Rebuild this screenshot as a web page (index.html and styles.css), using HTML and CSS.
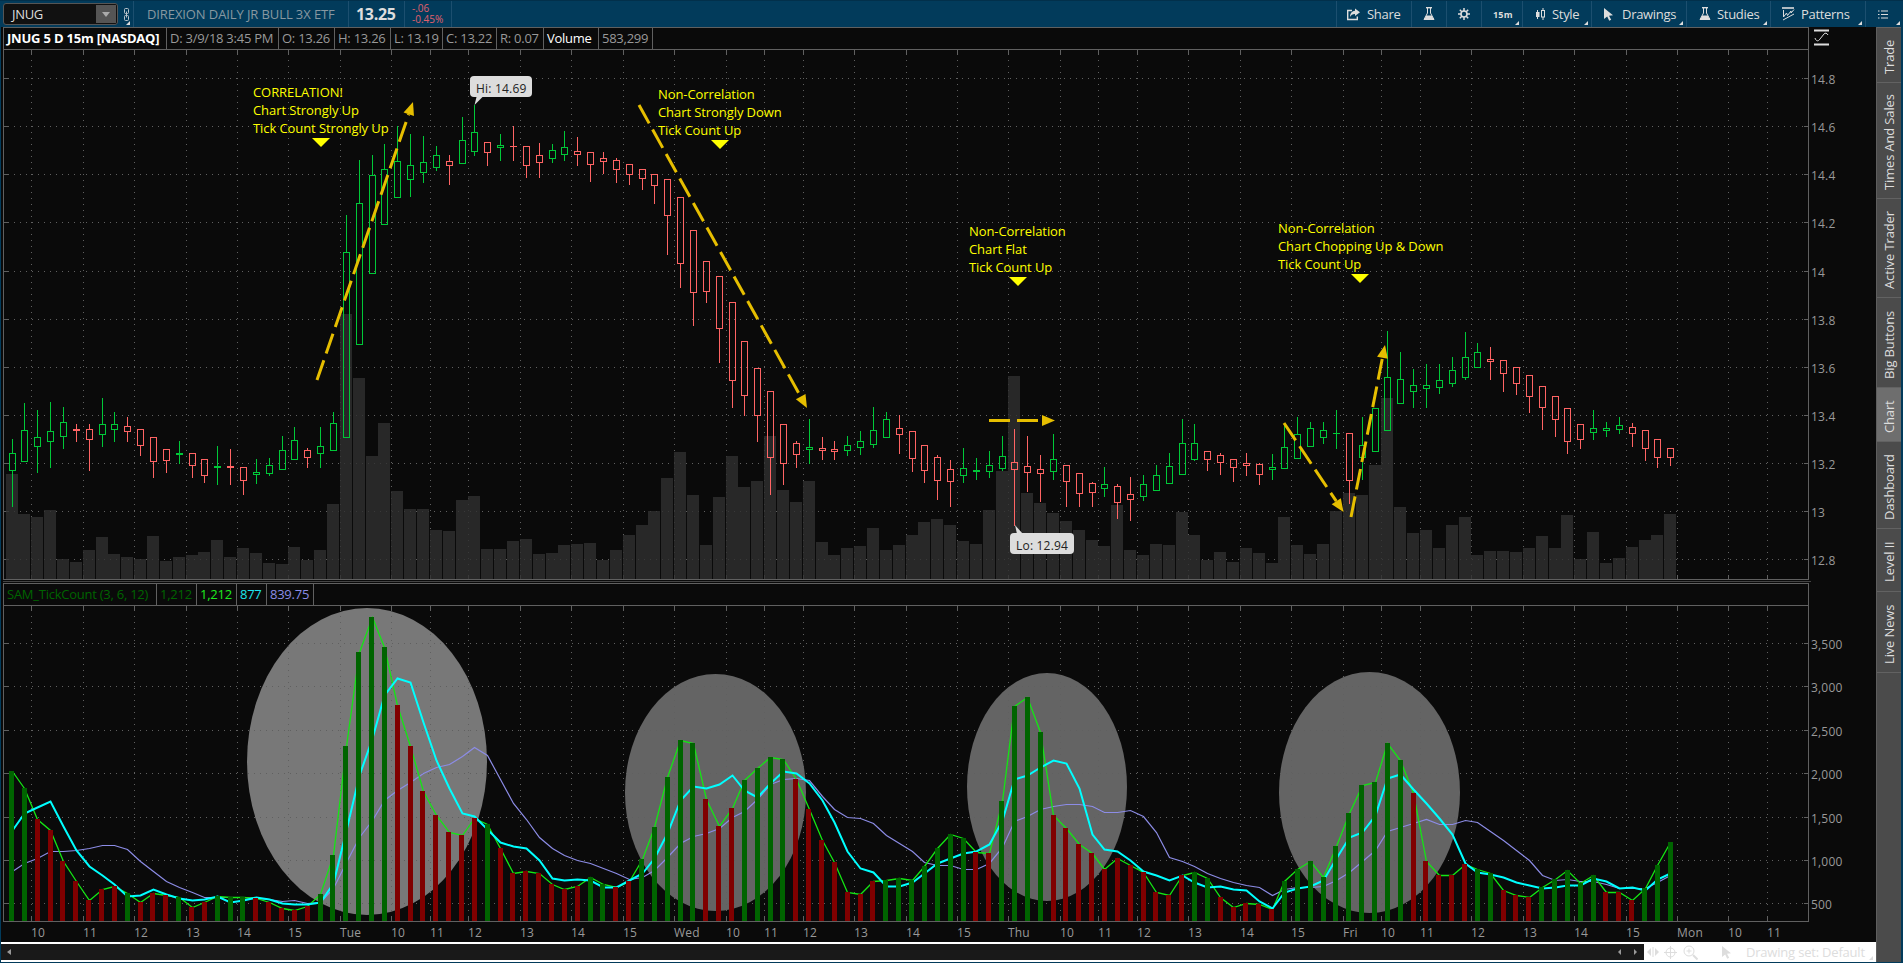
FILE: index.html
```
<!DOCTYPE html>
<html lang="en">
  <head>
    <meta charset="utf-8">
    <title>JNUG chart</title>
    <link rel="stylesheet" href="styles.css">
  </head>
  <body>
    <div class="toolbar">
      <div class="tool symbol">
        <div class="symbol-box"><span>JNUG</span><div class="drop"><svg width="8" height="5"><path d="M0 0h8l-4 5z" fill="#aaa"/></svg></div></div>
        <svg class="link" width="7" height="13" fill="none" stroke="#b9c4cb"><rect x="1.5" y="0.5" width="4" height="5" rx="1"/><rect x="1.5" y="7.5" width="4" height="5" rx="1"/><path d="M3.5 3.5v6"/></svg>
        <i class="corner"></i>
      </div>
      <div class="tool name">DIREXION DAILY JR BULL 3X ETF</div>
      <div class="tool last">13.25</div>
      <div class="tool change"><span>-.06</span><span>-0.45%</span></div>
      <div class="spacer"></div>
      <div class="tool share"><svg width="14" height="13" fill="none" stroke="#ddd" stroke-width="1.4"><path d="M6 2.5H1.7v9h9.6V8.5"/><path d="M9 0.5l5 3.8l-5 3.8V6C6.500 6 5 7 4 9C4 5.500 6 3 9 2.800z" fill="#ddd" stroke="none"/></svg><span>Share</span></div>
      <div class="tool flask"><svg width="12" height="14" fill="none" stroke="#ddd"><path d="M3 .7h6" stroke-width="1.4"/><path d="M4.500 1v5L1 12.500h10L7.500 6V1"/><path d="M3.300 8.500h5.400l2.500 4.500H.8z" fill="#ddd" stroke="none"/></svg></div>
      <div class="tool gear"><svg width="12" height="12" fill="none" stroke="#ddd"><circle cx="6" cy="6" r="3" stroke-width="1.6"/><path d="M6 0v3M6 9v3M0 6h3M9 6h3M1.800 1.800l2 2M8.200 8.200l2 2M10.200 1.800l-2 2M3.800 8.200l-2 2" stroke-width="1.500"/></svg></div>
      <div class="tool period">15m<i class="corner"></i></div>
      <div class="tool style"><svg width="11" height="12" fill="none" stroke="#ddd"><path d="M2.500 2v9M8 0v2.500M8 9v3"/><rect x="1" y="4" width="3.500" height="5" fill="#ddd" stroke="none"/><rect x="6.500" y="2.500" width="3" height="6.500"/></svg><span>Style</span><i class="corner"></i></div>
      <div class="tool drawings"><svg width="11" height="13"><path d="M1 0l9 7.300l-4 .5l2.200 4l-2 1l-2-4.200L1 11z" fill="#ddd"/></svg><span>Drawings</span><i class="corner"></i></div>
      <div class="tool studies"><svg width="12" height="14" fill="none" stroke="#ddd"><path d="M3 .7h6" stroke-width="1.4"/><path d="M4.500 1v5L1 12.500h10L7.500 6V1"/><path d="M3.300 8.500h5.400l2.500 4.500H.8z" fill="#ddd" stroke="none"/></svg><span>Studies</span><i class="corner"></i></div>
      <div class="tool patterns"><svg width="13" height="14" fill="none" stroke="#ddd"><path d="M0 1h12" stroke-width="1.6"/><path d="M1.500 3v7l3-4l1 2.500l3.500-4.500v2l3-3.500M1 13l11-6"/></svg><span>Patterns</span><i class="corner"></i></div>
      <div class="tool list"><svg width="10" height="9" stroke="#ddd" stroke-width="1.2"><path d="M0 1h1.500M3 1h7M0 4.500h1.500M3 4.500h7M0 8h1.500M3 8h7"/></svg><i class="corner"></i></div>
    </div>

    <div class="main">
      <div class="charts">
        <div class="pane price">
          <div class="legend">
            <b style="width:163px">JNUG 5 D 15m [NASDAQ]</b><span style="width:112px">D: 3/9/18 3:45 PM</span><span style="width:56px">O: 13.26</span><span style="width:56px">H: 13.26</span><span style="width:52px">L: 13.19</span><span style="width:54px">C: 13.22</span><span style="width:47px">R: 0.07</span><span class="white" style="width:55px">Volume</span><span style="width:54px">583,299</span>
          </div>
          <svg class="scale" width="15" height="17" fill="none" stroke="#ddd"><path d="M0 1.500h15M0 15.500h15" stroke-width="2"/><path d="M1 9c1 3 3 4 5 1l4-5c1-1.500 3-1 4 1"/></svg>
          <svg class="plot" id="price" viewBox="3 50 1873 530" width="1873" height="530"></svg>
        </div>
        <div class="split"></div>
        <div class="pane ticks">
          <div class="legend">
            <span class="darkgreen" style="width:153px">SAM_TickCount (3, 6, 12)</span><span class="darkgreen" style="width:40px">1,212</span><span class="lime" style="width:40px">1,212</span><span class="cyan" style="width:30px">877</span><span class="violet" style="width:47px">839.75</span>
          </div>
          <svg class="plot" id="ticks" viewBox="3 606 1873 336" width="1873" height="336"></svg>
        </div>
        <div class="bottom">
          <div class="scroll">
            <svg width="4" height="6"><path d="M4 0v6L0 3z" fill="#999"/></svg>
            <div class="spacer"></div>
            <svg width="3" height="6"><path d="M3 0v6L0 3z" fill="#999"/></svg>
            <svg width="3" height="6"><path d="M0 0v6l3-3z" fill="#999"/></svg>
          </div>
          <svg class="pan" width="12" height="10" fill="#ddd"><path d="M4 1v8L0 5zM8 1v8l4-4zM5.500 0h1v10h-1z"/></svg>
          <svg class="cross" width="13" height="13" fill="none" stroke="#ddd"><circle cx="6.500" cy="6.500" r="4.500"/><path d="M6.500 0v13M0 6.500h13"/></svg>
          <svg class="lens" width="15" height="15" fill="none" stroke="#ddd"><circle cx="6" cy="6" r="5"/><path d="M3.500 6h5M6 3.500v5"/><path d="M10 10l4.500 4.500" stroke-width="2"/></svg>
          <svg class="cursor" width="11" height="13"><path d="M1 0l9 7.300l-4 .5l2.200 4l-2 1l-2-4.200L1 11z" fill="#ddd"/></svg>
          <span>Drawing set: Default</span>
          <i class="corner"></i>
        </div>
      </div>
      <div class="tabs">
        <div class="tab" style="height:55px">Trade</div>
        <div class="tab" style="height:116px">Times And Sales</div>
        <div class="tab" style="height:99px">Active Trader</div>
        <div class="tab" style="height:90px">Big Buttons</div>
        <div class="tab active" style="height:54px">Chart</div>
        <div class="tab" style="height:87px">Dashboard</div>
        <div class="tab" style="height:63px">Level II</div>
        <div class="tab" style="height:81px">Live News</div>
        <div class="tab rest"></div>
      </div>
    </div>
    <script src="chart.js"></script>
  </body>
</html>
```
FILE: styles.css
```
* {
  box-sizing: border-box;
}
body {
  margin: 0;
  height: 963px;
  display: flex;
  flex-direction: column;
  overflow: hidden;
  background: #023b5b;
  color: #999;
  font-family: "Open Sans", "Noto Sans", sans-serif;
  font-size: 13px;
}
svg {
  display: block;
  flex: none;
}
.spacer {
  flex: 1;
}

/* toolbar */
.toolbar {
  height: 27px;
  display: flex;
  border-top: 1px solid #02304b;
  color: #ddd;
}
.tool {
  position: relative;
  display: flex;
  align-items: center;
  flex: none;
  border-right: 1px solid #1c4f6f;
  white-space: nowrap;
  letter-spacing: -.3px;
}
.corner {
  position: absolute;
  right: 3px;
  bottom: 2px;
  border-left: 4px solid transparent;
  border-bottom: 4px solid #ddd;
}
.symbol {
  width: 134px;
  padding-left: 3px;
}
.symbol-box {
  width: 115px;
  height: 22px;
  display: flex;
  align-items: center;
  justify-content: space-between;
  background: #111;
  border: 1px solid #555;
  border-radius: 3px;
  padding-left: 8px;
}
.drop {
  width: 20px;
  height: 18px;
  margin-right: 1px;
  background: #555;
  display: flex;
  align-items: center;
  justify-content: center;
}
.link {
  margin-left: 5px;
}
.name {
  width: 215px;
  padding-left: 13px;
  color: #8798a1;
  letter-spacing: -.1px;
}
.last {
  width: 56px;
  padding-left: 7px;
  font-size: 16px;
  font-weight: bold;
}
.change {
  width: 47px;
  padding-left: 7px;
  flex-direction: column;
  align-items: flex-start;
  justify-content: center;
  color: #e0606c;
  font-size: 10px;
  line-height: 11px;
  letter-spacing: 0;
}
.share {
  width: 76px;
  padding-left: 9px;
  gap: 7px;
  border-left: 1px solid #1c4f6f;
}
.flask {
  width: 35px;
  justify-content: center;
}
.gear {
  width: 35px;
  justify-content: center;
}
.period {
  width: 41px;
  padding-left: 11px;
  font-size: 9px;
  font-weight: bold;
  letter-spacing: .2px;
}
.style {
  width: 69px;
  padding-left: 12px;
  gap: 6px;
}
.drawings {
  width: 95px;
  padding-left: 11px;
  gap: 8px;
}
.studies {
  width: 84px;
  padding-left: 12px;
  gap: 6px;
}
.patterns {
  width: 95px;
  padding-left: 11px;
  gap: 6px;
}
.list {
  width: 37px;
  padding-left: 12px;
  border-right: 0;
}

/* charts */
.main {
  flex: 1;
  display: flex;
  padding: 0 1px 1px;
}
.charts {
  width: 1875px;
  display: flex;
  flex-direction: column;
  background: #0a0a0a;
}
.pane {
  display: grid;
  grid-template-columns: 1806px 67px;
  padding-left: 2px;
}
.legend {
  height: 23px;
  display: flex;
  border: 1px solid #606060;
}
.legend span, .legend b {
  border-right: 1px solid #606060;
  padding-left: 3px;
  line-height: 21px;
  white-space: nowrap;
  letter-spacing: -.25px;
}
.legend b {
  color: #fff;
  letter-spacing: -.2px;
}
.legend .white { color: #fff; }
.legend .darkgreen { color: #006400; }
.legend .lime { color: #1eea1e; }
.legend .cyan { color: #1ee6ee; }
.legend .violet { color: #8c8ce6; }
.scale {
  margin: 2px 0 0 5px;
}
.plot {
  grid-column: 1 / 3;
}
.split {
  height: 3px;
  width: 1808px;
  margin-left: 2px;
  border-bottom: 1px solid #0a0a0a;
  background: linear-gradient(#0a0a0a 1px, #444 1px);
}
.plot text {
  fill: #999;
  font-size: 12px;
  letter-spacing: .2px;
}
.plot .note {
  fill: #ff0;
  font-size: 13px;
  letter-spacing: -.08px;
}
.plot .bubble {
  fill: #222;
}

/* scrollbar row */
.bottom {
  flex: 1;
  display: flex;
  align-items: center;
  position: relative;
  background: #fff;
  color: #ddd;
}
.bottom > span {
  margin-left: 14px;
  letter-spacing: -.2px;
}
.scroll {
  width: 1643px;
  height: 16px;
  display: flex;
  align-items: center;
  padding: 0 7px 0 6px;
  gap: 13px;
  background: #191919;
}
.pan { margin-left: 3px; }
.cross { margin-left: 5px; }
.lens { margin-left: 6px; }
.cursor { margin-left: 23px; }

/* side tabs */
.tabs {
  width: 25px;
  display: flex;
  flex-direction: column;
  background: #4b4b4b;
  border-left: 1px solid #5e5e5e;
}
.tab {
  writing-mode: vertical-rl;
  transform: rotate(180deg);
  flex: none;
  width: 24px;
  padding-bottom: 4px;
  line-height: 24px;
  text-align: center;
  border-bottom: 1px solid #626262;
  color: #ddd;
  letter-spacing: -.15px;
}
.active {
  background: #6e6e6e;
}
.rest {
  flex: 1;
}
```
FILE: chart.js
```
const STEP = 12.8585;
const GRID = '#606060';
const UP = '#00c838';
const DOWN = '#ff6464';

// color, wick top, body top, body bottom, wick bottom
const candles = `
G439,453,471,507 G403,430,462,462 G410,437,447,473 G402,431,442,468 G407,422,437,449 R424,429,431,442 R424,429,440,471 G398,424,435,447 G412,424,430,442 R417,426,432,442
R429,429,446,456 R437,437,462,478 R449,449,461,473 G441,453,455,464 R453,453,466,478 R459,459,476,483 G446,466,468,485 R449,466,468,485 R467,467,481,495 G459,472,475,484
G458,465,474,476 G436,450,470,470 G427,440,460,460 R448,450,458,468 G427,446,454,468 G412,423,451,451 G215,252,438,438 G160,203,345,345 G155,175,274,274 G144,169,225,225
G126,161,198,198 G134,165,180,197 G136,162,173,183 G146,155,168,171 R155,161,166,185 G117,140,164,164 G105,132,152,156 R142,142,153,166 G134,145,148,161 R126,146,147,161
R146,146,166,178 R143,155,163,178 G144,150,159,163 G131,147,155,161 R137,151,155,166 R152,152,165,182 R152,158,162,174 R158,160,170,183 R164,164,175,185 R169,169,179,190
R174,174,186,204 R179,179,216,255 R197,197,264,288 R230,230,293,326 R261,261,292,303 R276,276,329,363 R302,302,381,408 R341,341,396,416 R368,368,416,442 R391,391,458,495
R424,424,464,485 R441,443,455,468 G419,447,450,464 R437,448,451,460 R441,449,452,460 G436,445,451,456 G431,441,448,455 G407,430,445,448 G412,419,438,438 R415,428,435,454
R431,431,459,472 R445,445,471,483 R455,457,481,500 R460,469,482,507 G448,468,476,483 G458,470,472,480 G451,465,472,478 G436,456,469,471 R429,462,470,526 R436,466,473,492
R455,469,474,502 G434,459,472,480 R465,465,482,507 R473,473,494,507 R482,483,493,507 G467,484,489,497 R484,486,503,519 R477,494,500,521 G475,484,497,501 G465,475,491,491
G453,466,484,484 G419,443,475,475 G424,443,460,461 R451,451,460,471 R453,455,463,475 R459,459,468,482 R453,463,466,476 R463,464,475,485 G454,467,470,480 G423,447,469,469
G417,434,459,459 G422,428,447,447 G422,430,438,444 G410,433,434,449 R433,433,481,504 G417,445,458,480 G408,408,452,452 G331,377,431,431 G352,379,404,404 G369,385,392,408
G364,385,389,408 G364,380,388,394 G357,370,384,387 G332,357,378,380 G343,352,368,368 R347,359,362,380 R360,360,374,392 R367,367,384,395 R375,375,397,413 R386,386,408,430
R396,396,420,437 R408,408,442,454 R424,424,440,449 G410,428,433,440 G422,428,431,437 G417,425,430,434 R423,427,434,447 R430,430,449,461 R439,439,458,468 R448,448,458,466
`.trim().split(/\s+/).map(c => [c[0], ...c.slice(1).split(',').map(Number)]);

const volume = [
  474,514,517,510,559,562,550,537,554,557,559,536,561,557,555,552,540,557,548,553,563,564,547,560,550,504,
  314,378,456,423,491,509,509,530,531,500,496,549,549,541,539,554,553,545,544,543,560,550,535,525,511,478,
  452,495,545,497,456,487,481,436,490,502,481,542,555,548,546,528,550,545,535,522,519,525,541,544,510,471,
  376,493,503,513,521,530,540,546,505,550,555,544,545,512,535,560,552,562,548,553,563,517,545,554,544,511,
  493,495,465,398,507,533,530,548,525,517,555,551,551,552,548,536,548,515,559,532,563,558,547,540,535,514
];

const ticks = [
  771,788,819,830,861,881,900,889,886,893,902,893,895,897,907,902,896,897,897,898,902,908,910,906,894,855,
  746,652,617,647,705,746,791,815,832,835,818,824,848,873,871,873,884,889,886,877,884,887,881,859,827,777,
  740,743,799,826,808,780,768,757,759,779,809,840,862,892,894,881,880,878,880,866,848,834,838,852,853,801,
  706,697,732,815,828,844,853,869,858,865,872,892,895,875,872,878,897,907,903,904,909,881,869,861,877,846,
  813,785,782,743,760,793,861,875,875,864,869,873,890,895,897,887,879,870,883,875,892,892,900,888,865,842
];
const tickColors =
  'GGRRRRRRRGRRRGRRGGGRRRRRGG' +
  'GGGGRRRRRRRGRRRRRRRGGRRGGG' +
  'GGRRRGGGGRRRRRRRGGGGGGGRRG' +
  'GGGRRRRRRRRRRRGGRRRRRGGGGG' +
  'GGGGGRRRRRGGRRRGGGGGRRRGGG';

const fast = [
  830,813,807,801,826,850,866,875,884,896,895,889,894,898,900,899,896,902,900,897,899,903,904,904,902,883,
  830,775,738,695,678,682,722,760,788,813,816,829,842,846,848,860,878,880,879,880,887,887,880,873,858,833,
  800,786,788,784,775,790,797,783,771,773,783,800,822,851,868,872,886,886,882,873,863,858,853,851,844,820,
  779,775,767,760,763,788,834,849,851,860,871,875,880,875,882,887,886,889,890,901,908,892,888,886,880,858,
  837,832,815,778,774,789,803,818,834,863,872,874,877,882,885,888,887,885,885,878,881,888,887,890,879,873
];
const slow = [
  871,863,858,851,851,850,848,845,845,849,861,871,881,887,892,897,897,897,897,898,899,901,900,903,902,888,
  862,837,820,800,790,782,773,767,764,756,747,755,779,803,819,837,848,855,860,863,868,873,879,877,870,857,
  843,836,833,828,817,811,799,784,779,778,780,796,809,817,818,823,835,843,851,862,865,865,869,869,863,847,
  821,816,809,806,804,804,806,812,812,810,816,832,857,861,866,873,878,882,885,887,895,889,887,887,886,880,
  872,861,850,831,827,823,819,824,824,820,822,831,840,850,860,875,880,879,881,881,884,888,888,888,882,875
];

const times = [
  [31,'10'],[83,'11'],[134,'12'],[186,'13'],[237,'14'],[288,'15'],
  [340,'Tue'],[391,'10'],[430,'11'],[468,'12'],[520,'13'],[571,'14'],[623,'15'],
  [674,'Wed'],[726,'10'],[764,'11'],[803,'12'],[854,'13'],[906,'14'],[957,'15'],
  [1008,'Thu'],[1060,'10'],[1098,'11'],[1137,'12'],[1188,'13'],[1240,'14'],[1291,'15'],
  [1343,'Fri'],[1381,'10'],[1420,'11'],[1471,'12'],[1523,'13'],[1574,'14'],[1626,'15'],
  [1677,'Mon'],[1728,'10'],[1767,'11']
];
const prices = [[78,'14.8'],[126,'14.6'],[174,'14.4'],[222,'14.2'],[271,'14'],[319,'13.8'],[367,'13.6'],[415,'13.4'],[463,'13.2'],[511,'13'],[559,'12.8']];
const counts = [[643,'3,500'],[686,'3,000'],[730,'2,500'],[773,'2,000'],[817,'1,500'],[860,'1,000'],[903,'500']];

const notes = [
  [253, 97, 312, 138, ['CORRELATION!', 'Chart Strongly Up', 'Tick Count Strongly Up']],
  [658, 99, 711, 140, ['Non-Correlation', 'Chart Strongly Down', 'Tick Count Up']],
  [969, 236, 1009, 277, ['Non-Correlation', 'Chart Flat', 'Tick Count Up']],
  [1278, 233, 1351, 274, ['Non-Correlation', 'Chart Chopping Up & Down', 'Tick Count Up']]
];
const arrows = [
  [317, 380, 413, 102],
  [639, 105, 807, 408],
  [989, 420.5, 1055, 420.5],
  [1284, 423, 1343.5, 512],
  [1351, 517, 1385, 345]
];

const cx = i => 12 + Math.floor(i * STEP);
const barX = i => Math.floor(11.48 + i * STEP) - 2;

function rect(x, y, w, h, fill) {
  return `<rect x="${x}" y="${y}" width="${w}" height="${h}" fill="${fill}" shape-rendering="crispEdges"/>`;
}

function text(x, y, s, cls = '') {
  return `<text x="${x}" y="${y}" class="${cls}">${s.replace('&', '&amp;')}</text>`;
}

function grid(rows, top, bottom) {
  let s = `<g stroke="${GRID}" shape-rendering="crispEdges">`;
  rows.forEach(([y]) => {
    s += `<path d="M14 ${y + .5}H1804" stroke-dasharray="1 5"/><path d="M3 ${y + .5}h6M1804 ${y + .5}h5"/>`;
  });
  times.forEach(([x]) => {
    s += `<path d="M${x + .5} ${top + 10}V${bottom - 4}" stroke-dasharray="1 5"/><path d="M${x + .5} ${top}v5M${x + .5} ${bottom}v-4"/>`;
  });
  return s + '</g>';
}

function frame(top, bottom) {
  return `<path d="M3.5 ${top}V${bottom + .5}H1808.5V${top}" fill="none" stroke="${GRID}" shape-rendering="crispEdges"/>`;
}

function arrow([x1, y1, x2, y2]) {
  const len = Math.hypot(x2 - x1, y2 - y1);
  const ux = (x2 - x1) / len, uy = (y2 - y1) / len;
  const bx = x2 - ux * 13, by = y2 - uy * 13;
  return `<path d="M${x1} ${y1}L${bx} ${by}" stroke="#e6be00" stroke-width="3" stroke-dasharray="21 7"/>
    <path d="M${x2} ${y2}L${bx - uy * 5.5} ${by + ux * 5.5}L${bx + uy * 5.5} ${by - ux * 5.5}z" fill="#e6be00"/>`;
}

function line(values, color, width) {
  const points = values.map((y, i) => `${cx(i) + .5},${y + .5}`).join(' ');
  return `<polyline points="${points}" fill="none" stroke="${color}" stroke-width="${width}"/>`;
}

function drawPrice() {
  let s = grid(prices, 50, 579);
  volume.forEach((y, i) => s += rect(cx(i) - 6, y, 12, 579 - y, 'rgba(47,47,47,.8)'));
  candles.forEach(([c, high, top, bottom, low], i) => {
    const color = c === 'G' ? UP : DOWN;
    const x = cx(i);
    s += rect(x, high, 1, top - high, color) + rect(x, bottom, 1, low - bottom, color);
    if (bottom - top < 3) s += rect(x - 3, top, 7, bottom - top, color);
    else s += `<rect x="${x - 2.5}" y="${top + .5}" width="6" height="${bottom - top - 1}" fill="none" stroke="${color}" shape-rendering="crispEdges"/>`;
  });
  arrows.forEach(a => s += arrow(a));
  notes.forEach(([x, y, tx, ty, lines]) => {
    lines.forEach((l, i) => s += text(x, y + i * 18, l, 'note'));
    s += `<path d="M${tx} ${ty}h18l-9 9z" fill="#ff0"/>`;
  });
  s += '<path d="M474.500 105l2-8h6z" fill="#ddd"/><rect x="470" y="76" width="62" height="21" rx="4" fill="#ddd"/>' + text(476, 93, 'Hi: 14.69', 'bubble');
  s += '<path d="M1015 525l2 9h6z" fill="#ddd"/><rect x="1010" y="533" width="64" height="21" rx="4" fill="#ddd"/>' + text(1016, 550, 'Lo: 12.94', 'bubble');
  s += frame(50, 579);
  prices.forEach(([y, l]) => s += text(1811, y + 6, l));
  document.getElementById('price').innerHTML = s;
}

function drawTicks() {
  let s = '<ellipse cx="367" cy="761.500" rx="120" ry="153.500" fill="#787878"/>';
  [[715.5, 792.5, 90.5, 118.5], [1047, 787, 80, 114], [1369.5, 792.5, 90.5, 120.5]].forEach(e => {
    s += `<ellipse cx="${e[0]}" cy="${e[1]}" rx="${e[2]}" ry="${e[3]}" fill="#646464"/>`;
  });
  s += grid(counts, 606, 921);
  s += line(slow, '#8c8ce6', 1.2) + line(ticks, '#14e614', 1.3) + line(fast, '#00ffff', 2);
  ticks.forEach((y, i) => s += rect(barX(i), y, 5, 921 - y, tickColors[i] === 'G' ? '#006400' : '#800000'));
  s += frame(606, 921);
  counts.forEach(([y, l]) => s += text(1811, y + 6, l));
  times.forEach(([x, l]) => s += text(x, 937, l));
  document.getElementById('ticks').innerHTML = s;
}

drawPrice();
drawTicks();
```
